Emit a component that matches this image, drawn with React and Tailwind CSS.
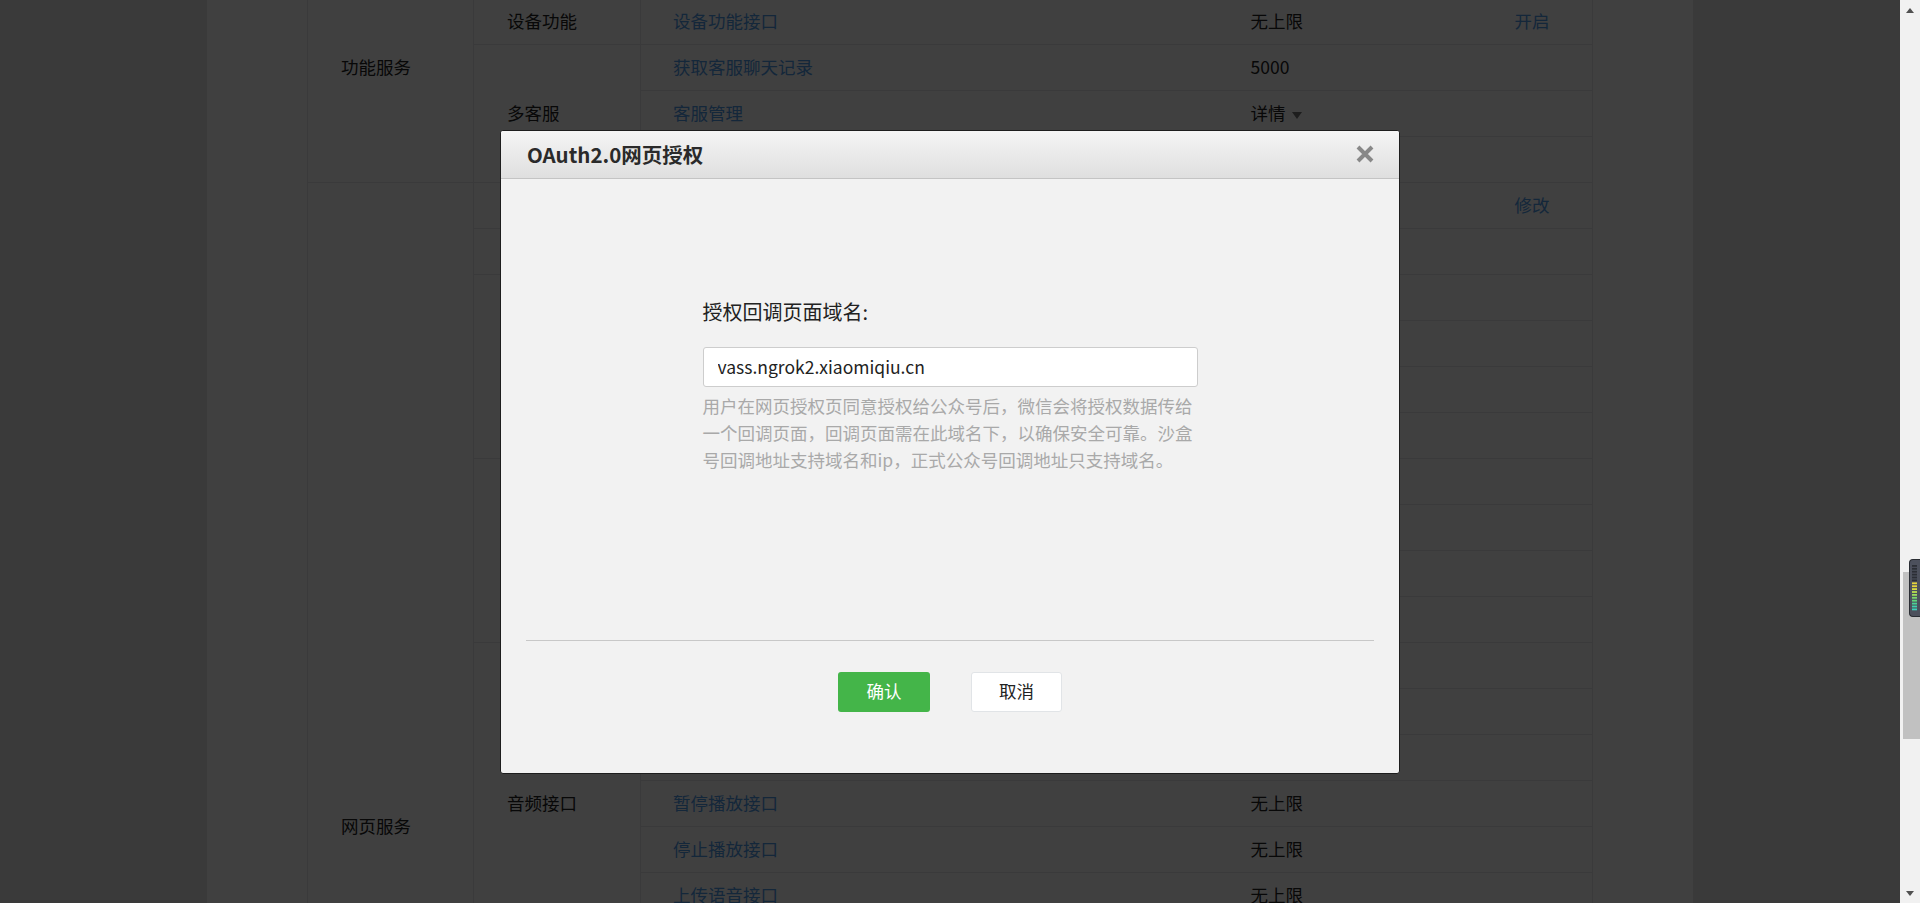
import React from 'react';

const groups = [
  {
    label: '功能服务',
    subs: [
      { label: '模板消息', items: [{ name: '发送模板消息', limit: '100000' }] },
      { label: '设备功能', items: [{ name: '设备功能接口', limit: '无上限', action: '开启' }] },
      {
        label: '多客服',
        items: [
          { name: '获取客服聊天记录', limit: '5000' },
          { name: '客服管理', limit: '详情', dropdown: true },
          { name: '客服帐号管理', limit: '无上限' },
        ],
      },
    ],
  },
  {
    label: '网页服务',
    subs: [
      { label: '网页帐号', items: [{ name: '网页授权获取用户基本信息', limit: '无上限', action: '修改' }] },
      { label: '基础接口', items: [{ name: '判断当前客户端版本是否支持指定JS接口', limit: '无上限' }] },
      {
        label: '分享接口',
        items: [
          { name: '获取“分享到朋友圈”按钮点击状态及自定义分享内容接口', limit: '无上限' },
          { name: '获取“分享给朋友”按钮点击状态及自定义分享内容接口', limit: '无上限' },
          { name: '获取“分享到QQ”按钮点击状态及自定义分享内容接口', limit: '无上限' },
          { name: '获取“分享到腾讯微博”按钮点击状态及自定义分享内容接口', limit: '无上限' },
        ],
      },
      {
        label: '图像接口',
        items: [
          { name: '拍照或从手机相册中选图接口', limit: '无上限' },
          { name: '预览图片接口', limit: '无上限' },
          { name: '上传图片接口', limit: '无上限' },
          { name: '下载图片接口', limit: '无上限' },
        ],
      },
      {
        label: '音频接口',
        items: [
          { name: '开始录音接口', limit: '无上限' },
          { name: '停止录音接口', limit: '无上限' },
          { name: '播放语音接口', limit: '无上限' },
          { name: '暂停播放接口', limit: '无上限' },
          { name: '停止播放接口', limit: '无上限' },
          { name: '上传语音接口', limit: '无上限' },
          { name: '下载语音接口', limit: '无上限' },
        ],
      },
      { label: '智能接口', items: [{ name: '识别音频并返回识别结果接口', limit: '无上限' }] },
      { label: '设备信息', items: [{ name: '获取网络状态接口', limit: '无上限' }] },
      {
        label: '地理位置',
        items: [
          { name: '使用微信内置地图查看位置接口', limit: '无上限' },
          { name: '获取地理位置接口', limit: '无上限' },
        ],
      },
      {
        label: '界面操作',
        items: [
          { name: '隐藏右上角菜单接口', limit: '无上限' },
          { name: '显示右上角菜单接口', limit: '无上限' },
          { name: '关闭当前网页窗口接口', limit: '无上限' },
          { name: '批量隐藏功能按钮接口', limit: '无上限' },
          { name: '批量显示功能按钮接口', limit: '无上限' },
          { name: '隐藏所有非基础按钮接口', limit: '无上限' },
          { name: '显示所有功能按钮接口', limit: '无上限' },
        ],
      },
    ],
  },
];

const ApiTable = () => {
  const rows = [];
  groups.forEach((g, gi) => {
    const total = g.subs.reduce((n, s) => n + s.items.length, 0);
    let first = true;
    g.subs.forEach((s, si) => {
      s.items.forEach((it, ii) => {
        rows.push(
          <tr key={`${gi}-${si}-${ii}`}>
            {first && (
              <td rowSpan={total} className="w-[166px] border border-[#e7e7eb] pl-[33px] align-middle">
                {g.label}
              </td>
            )}
            {ii === 0 && (
              <td rowSpan={s.items.length} className="w-[167px] border-r border-b border-[#e7e7eb] pl-[33px] align-middle">
                {s.label}
              </td>
            )}
            <td className="w-[576px] h-[46px] border-b border-[#e7e7eb] pl-[32px] align-middle text-[#4f9ae8]">
              {it.name}
            </td>
            <td className="w-[264px] border-b border-[#e7e7eb] pl-[34px] align-middle">
              {it.limit}
              {it.dropdown && (
                <span className="inline-block ml-[6px] align-middle border-x-[5px] border-t-[7px] border-x-transparent border-t-[#777]" />
              )}
            </td>
            <td className="border-r border-b border-[#e7e7eb] pl-[34px] align-middle text-[#4f9ae8]">
              {it.action}
            </td>
          </tr>
        );
        first = false;
      });
    });
  });
  return (
    <table className="w-full border-collapse text-[17.5px] text-[#222] mt-[-48px]">
      <tbody>{rows}</tbody>
    </table>
  );
};

const OAuthDialog = () => (
  <div className="w-[900px] h-[644px] flex flex-col bg-[#f2f2f2] border border-[#1e1e1e] rounded-[3px] overflow-hidden">
    <div className="h-[48px] shrink-0 flex items-center justify-between pl-[26px] pr-[25px] bg-gradient-to-b from-[#f5f5f5] to-[#dfdfdf] border-b border-[#c4c4c4]">
      <h2 className="text-[20.5px] font-bold text-[#2a2a2a] leading-none">OAuth2.0网页授权</h2>
      <button className="w-[18px] h-[18px] flex items-center justify-center">
        <svg width="18" height="18" viewBox="0 0 18 18">
          <path d="M2 2 L16 16 M16 2 L2 16" stroke="#888" strokeWidth="4" />
        </svg>
      </button>
    </div>

    <div className="flex-1 flex justify-center pt-[119px]">
      <div className="w-[495px]">
        <label className="block text-[20px] leading-[27px] text-[#222]">授权回调页面域名:</label>
        <input
          type="text"
          defaultValue="vass.ngrok2.xiaomiqiu.cn"
          className="mt-[22px] w-full h-[40px] px-[14px] bg-white border border-[#cdcdcd] rounded-[3px] text-[17.5px] text-[#222] outline-none"
        />
        <p className="mt-[5px] text-[17.5px] leading-[27px] text-[#a9a9a9]">
          用户在网页授权页同意授权给公众号后，微信会将授权数据传给一个回调页面，回调页面需在此域名下，以确保安全可靠。沙盒号回调地址支持域名和ip，正式公众号回调地址只支持域名。
        </p>
      </div>
    </div>

    <div className="h-[133px] shrink-0 mx-[25px] border-t border-[#c8c8c8] flex justify-center gap-[41px] pt-[31px]">
      <button className="w-[92px] h-[40px] rounded-[3px] bg-[#44b549] text-white text-[17.5px]">确认</button>
      <button className="w-[91px] h-[40px] rounded-[3px] bg-white border border-[#e1e4e7] text-[#222] text-[17.5px]">取消</button>
    </div>
  </div>
);

const Meter = () => {
  const colors = [
    '#2b2e35', '#2b2e35', '#2b2e35', '#2b2e35', '#2b2e35', '#2b2e35',
    '#e6d43c', '#e6d43c', '#d6dc44', '#b9de4e', '#9bdc5c', '#7ad86c',
    '#5fd67c', '#4ad495', '#3fd3ad', '#3cd2b8',
  ];
  return (
    <div className="absolute right-0 top-[559px] w-[11px] h-[58px] rounded-l-[4px] bg-[#4c505c] border border-r-0 border-[#2a2d33]">
      <svg width="10" height="56" viewBox="0 0 10 56">
        {colors.map((c, i) => (
          <rect key={i} x="2" y={5 + i * 2.9} width="5" height="1.8" fill={c} />
        ))}
      </svg>
    </div>
  );
};

const Scrollbar = () => (
  <div className="relative w-[20px] h-[903px] bg-[#f1f1f1] flex flex-col items-center">
    <div className="h-[20px] flex items-center justify-center">
      <span className="block border-x-[4px] border-b-[5px] border-x-transparent border-b-[#505050]" />
    </div>
    <div className="mt-[552px] ml-[3px] w-[17px] h-[167px] bg-[#c1c1c1]" />
    <div className="mt-auto h-[20px] flex items-center justify-center">
      <span className="block border-x-[4px] border-t-[5px] border-x-transparent border-t-[#505050]" />
    </div>
    <Meter />
  </div>
);

export default function App() {
  return (
    <div className="flex w-[1920px] h-[903px] overflow-hidden font-['Noto_Sans_CJK_SC',sans-serif]">
      <div className="relative flex-1 h-[903px] overflow-hidden bg-[#e8e8e8]">
        <div className="w-[1486px] mx-auto bg-white px-[100px]">
          <ApiTable />
        </div>
        <div className="absolute inset-0 bg-black/75 flex items-center justify-center">
          <OAuthDialog />
        </div>
      </div>
      <Scrollbar />
    </div>
  );
}
